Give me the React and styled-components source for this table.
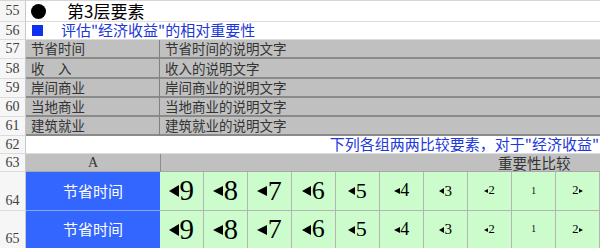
import React from "react";
import styled, { createGlobalStyle } from "styled-components";

const GlobalStyle = createGlobalStyle`
  html, body {
    margin: 0;
    padding: 0;
    background: #fff;
    overflow: hidden;
  }
`;

const CJK = `"Noto Sans CJK SC", "Noto Sans", sans-serif`;
const SERIF = `"Liberation Serif", "DejaVu Serif", serif`;

const Sheet = styled.div`
  display: grid;
  grid-template-columns: 26px 134px repeat(10, 44px);
  grid-template-rows: 21px 18px 19px 20px 19px 19px 19px 18px 18px 39px 38px;
  width: 600px;
  height: 248px;
  border-top: 1px solid #d6d6d6;
  box-sizing: border-box;
  overflow: hidden;
  line-height: 1.1;
`;

const RowNum = styled.div`
  grid-column: 1;
  display: flex;
  justify-content: center;
  align-items: ${(p) => (p.$bottom ? "flex-end" : "center")};
  padding-bottom: ${(p) => (p.$bottom ? "2px" : "0")};
  background: #f6f6f6;
  border-right: 1px solid #c8c8c8;
  border-bottom: 1px solid #dcdcdc;
  box-sizing: border-box;
  font-family: ${SERIF};
  font-size: 14px;
  color: #404040;
`;

const TitleCell = styled.div`
  grid-column: 2 / -1;
  display: flex;
  align-items: center;
  border-bottom: 1px solid #dcdcdc;
  box-sizing: border-box;
  padding-left: ${(p) => p.$pad}px;
  font-family: ${CJK};
  white-space: nowrap;
`;

const Dot = styled.span`
  width: 15px;
  height: 15px;
  border-radius: 50%;
  background: #000;
  margin-right: 21px;
`;

const Square = styled.span`
  width: 11px;
  height: 11px;
  background: #1030f0;
  margin-right: 18px;
`;

const Heading = styled.span`
  font-size: 17px;
  color: #000;
`;

const SubHeading = styled.span`
  font-size: 15px;
  color: #2038d8;
`;

const GrayCell = styled.div`
  grid-column: ${(p) => p.$col};
  display: flex;
  align-items: center;
  padding-left: 5px;
  background: #c0c0c0;
  border-bottom: 2px solid #8a8a8a;
  border-right: ${(p) => (p.$divider ? "1px solid #808080" : "none")};
  box-sizing: border-box;
  font-family: ${CJK};
  font-size: 13.5px;
  color: #333;
  white-space: nowrap;
`;

const NoteCell = styled.div`
  grid-column: 2 / -1;
  display: flex;
  justify-content: flex-end;
  align-items: center;
  padding-right: 1px;
  border-bottom: 1px solid #dcdcdc;
  box-sizing: border-box;
  font-family: ${CJK};
  font-size: 15px;
  color: #2038d8;
  white-space: nowrap;
`;

const HeadCell = styled.div`
  grid-column: ${(p) => p.$col};
  display: flex;
  align-items: center;
  justify-content: ${(p) => (p.$center ? "center" : "flex-start")};
  padding-left: ${(p) => p.$pad || 0}px;
  background: #c0c0c0;
  border-left: ${(p) => (p.$divider ? "1px solid #8c8c8c" : "none")};
  border-bottom: 1px solid #a8a8a8;
  box-sizing: border-box;
  font-family: ${(p) => (p.$serif ? SERIF : CJK)};
  font-size: ${(p) => (p.$serif ? 14 : 14.5)}px;
  color: #333;
  white-space: nowrap;
`;

const ItemCell = styled.div`
  grid-column: 2;
  display: flex;
  align-items: center;
  justify-content: center;
  background: #3366ff;
  border-bottom: 1px solid #8aa6f5;
  box-sizing: border-box;
  font-family: ${CJK};
  font-size: 15px;
  color: #fff;
`;

const ScoreCell = styled.div`
  display: flex;
  align-items: center;
  justify-content: center;
  background: #ccfccc;
  border-right: 1px solid #b4b4b4;
  border-bottom: 1px solid #b4b4b4;
  box-sizing: border-box;
  font-family: ${SERIF};
  font-size: ${(p) => p.$size}px;
  color: #000;
`;

const LeftTri = styled.span`
  width: 0;
  height: 0;
  border-top: ${(p) => p.$s * 0.21}px solid transparent;
  border-bottom: ${(p) => p.$s * 0.21}px solid transparent;
  border-right: ${(p) => p.$s * 0.36}px solid #000;
  margin-right: ${(p) => p.$s * 0.02}px;
`;

const RightTri = styled.span`
  width: 0;
  height: 0;
  border-top: ${(p) => p.$s * 0.21}px solid transparent;
  border-bottom: ${(p) => p.$s * 0.21}px solid transparent;
  border-left: ${(p) => p.$s * 0.36}px solid #000;
  margin-left: ${(p) => p.$s * 0.04}px;
`;

const items = [
  ["节省时间", "节省时间的说明文字"],
  ["收　入", "收入的说明文字"],
  ["岸间商业", "岸间商业的说明文字"],
  ["当地商业", "当地商业的说明文字"],
  ["建筑就业", "建筑就业的说明文字"],
];

const scores = [
  { n: "9", size: 29, dir: "l" },
  { n: "8", size: 28.5, dir: "l" },
  { n: "7", size: 28, dir: "l" },
  { n: "6", size: 26, dir: "l" },
  { n: "5", size: 22, dir: "l" },
  { n: "4", size: 18, dir: "l" },
  { n: "3", size: 15, dir: "l" },
  { n: "2", size: 12.5, dir: "l" },
  { n: "1", size: 9.5, dir: "" },
  { n: "2", size: 12.5, dir: "r" },
];

const ScoreRow = () =>
  scores.map((s, i) => (
    <ScoreCell key={i} $size={s.size}>
      {s.dir === "l" && <LeftTri $s={s.size} />}
      {s.n}
      {s.dir === "r" && <RightTri $s={s.size} />}
    </ScoreCell>
  ));

const App = () => {
  return (
    <>
      <GlobalStyle />
      <Sheet>
        <RowNum>55</RowNum>
        <TitleCell $pad={5}>
          <Dot />
          <Heading>第3层要素</Heading>
        </TitleCell>

        <RowNum>56</RowNum>
        <TitleCell $pad={6}>
          <Square />
          <SubHeading>评估"经济收益"的相对重要性</SubHeading>
        </TitleCell>

        {items.map(([name, desc], i) => (
          <React.Fragment key={name}>
            <RowNum>{57 + i}</RowNum>
            <GrayCell $col="2" $divider>
              {name}
            </GrayCell>
            <GrayCell $col="3 / -1">{desc}</GrayCell>
          </React.Fragment>
        ))}

        <RowNum>62</RowNum>
        <NoteCell>下列各组两两比较要素，对于"经济收益"</NoteCell>

        <RowNum>63</RowNum>
        <HeadCell $col="2" $center $serif>
          A
        </HeadCell>
        <HeadCell $col="3 / -1" $pad={337} $divider>
          重要性比较
        </HeadCell>

        <RowNum $bottom>64</RowNum>
        <ItemCell>节省时间</ItemCell>
        <ScoreRow />

        <RowNum $bottom>65</RowNum>
        <ItemCell>节省时间</ItemCell>
        <ScoreRow />
      </Sheet>
    </>
  );
};

export default App;
